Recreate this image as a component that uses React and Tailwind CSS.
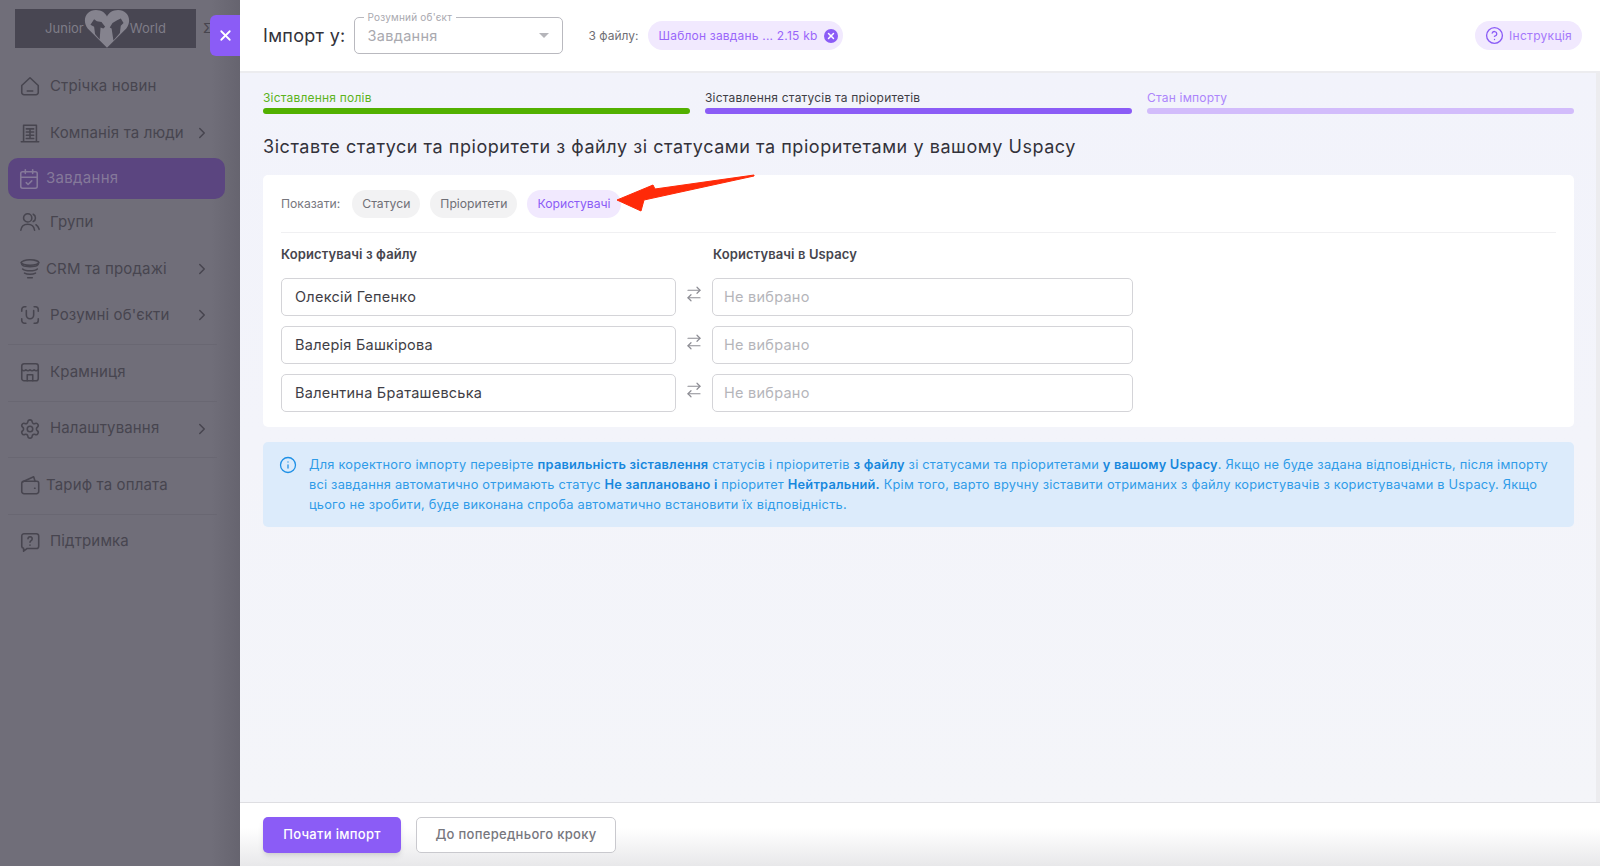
import { ChevronRight, X, Settings, CalendarCheck, ArrowRightLeft, Info, CircleHelp } from 'lucide-react';

const stroke = { fill: 'none', stroke: 'currentColor', strokeWidth: 1.7, strokeLinecap: 'round', strokeLinejoin: 'round' };

const Svg = ({ children }) => (
  <svg viewBox="0 0 24 24" className="w-[22px] h-[22px] shrink-0" {...stroke}>{children}</svg>
);

const HomeIcon = () => (
  <Svg>
    <path d="M3 11.5 12 3l9 8.5V19a2.5 2.5 0 0 1-2.5 2.5h-13A2.5 2.5 0 0 1 3 19z" />
    <path d="M9 17.5h6" />
  </Svg>
);
const BuildingIcon = () => (
  <Svg>
    <path d="M5 21.5V3.5h14v18M2.5 21.5h19" />
    <path d="M8 7.5h8M8 11h8M8 14.5h8M8 18h8M12 7.5V18" />
  </Svg>
);
const GroupIcon = () => (
  <Svg>
    <circle cx="9.5" cy="7.5" r="4.5" />
    <path d="M2 21c.6-4.5 3.4-6.5 7.5-6.5S16.4 16.500 17 21" />
    <path d="M15.500 3.500a4.500 4.500 0 0 1 0 8M18.500 15c1.800.9 2.900 3 3.500 5" />
  </Svg>
);
const CoinsIcon = () => (
  <Svg>
    <ellipse cx="12" cy="5" rx="9.500" ry="3" />
    <path d="M2.500 5c.4 3 1.400 4.500 9.500 4.500S21 8 21.500 5" />
    <path d="M4 12c1.500 1.300 4.300 2 8 2s6.500-.7 8-2M6 16.500c1.500.8 3.600 1.200 6 1.200s4.500-.4 6-1.200M9.500 21.500h5" />
  </Svg>
);
const ScanIcon = () => (
  <Svg>
    <path d="M3 8V6a3 3 0 0 1 3-3h1.500M16.500 3H18a3 3 0 0 1 3 3v2M21 16v2a3 3 0 0 1-3 3h-1.500M7.500 21H6a3 3 0 0 1-3-3v-2" />
    <path d="M8 7v5a4 4 0 0 0 8 0V7" />
  </Svg>
);
const StoreIcon = () => (
  <Svg>
    <rect x="3" y="3" width="18" height="18.500" rx="2.500" />
    <path d="M3 9.500c1.500 1.500 3 1.500 4.500 0 1.500 1.500 3 1.500 4.500 0 1.500 1.500 3 1.500 4.500 0 1.500 1.500 3 1.500 4.500 0" />
    <path d="M9 21.500V15h6v6.500" />
  </Svg>
);
const WalletIcon = () => (
  <Svg>
    <path d="M3 10.500a2.500 2.500 0 0 1 2.500-2.500h14a2 2 0 0 1 2 2v9a2.500 2.500 0 0 1-2.500 2.500H5.500A2.500 2.500 0 0 1 3 19z" />
    <path d="M4 8.500 16 3l1.500 5" />
    <path d="M17 15.500h.5" />
  </Svg>
);
const HelpIcon = () => (
  <Svg>
    <path d="M6 3h13a2.500 2.500 0 0 1 2.500 2.500v11A2.500 2.500 0 0 1 19 19H9l-4 3v-3.100A2.500 2.500 0 0 1 3 16.500v-11A2.500 2.500 0 0 1 6 3z" />
    <path d="M9.800 8.500a2.300 2.300 0 1 1 3.500 2c-.8.500-1.300 1-1.300 1.800M12 15.300v.2" />
  </Svg>
);

const Logo = () => (
  <div className="w-[181px] h-[39px] bg-[#484652] flex items-center justify-center text-[#7f7d88] text-[13px] overflow-hidden">
    <span>Junior</span>
    <svg viewBox="0 0 50 42" className="w-[46px] h-[39px]">
      <path d="M25 42 4 21C-3 11 3 1 13 1c6 0 10 3 12 7 2-4 6-7 12-7 10 0 16 10 9 20z" fill="#85838e" />
      <path d="M7 17l4-6 3 2 5 1 4 5-2 2-3-1-1 13-5-6-1-8z" fill="#484652" />
      <path d="M43 15l-3-5-4 2-5 3-3 5 2 1 2 13 7-8 1-8z" fill="#484652" />
    </svg>
    <span>World</span>
  </div>
);

const NavItem = ({ Icon, label, chevron, shift, inSection, className = '' }) => (
  <div className={`h-[46px] flex items-center text-[#47454f] ${inSection ? 'pl-[11px] pr-[6px]' : 'pl-[19px] pr-[29px]'} ${className}`}>
    <Icon className="w-[22px] h-[22px] shrink-0" strokeWidth={1.7} />
    <span className={`${shift ? 'ml-[5px]' : 'ml-[9px]'} text-[15px] tracking-[0.15px] whitespace-nowrap`}>{label}</span>
    {chevron && <ChevronRight className="ml-auto w-[18px] h-[18px]" strokeWidth={2} />}
  </div>
);

const Section = (props) => (
  <div className="ml-[8px] mr-[23px] border-t border-[#696772] pt-[4px] pb-[5.500px]">
    <NavItem {...props} inSection />
  </div>
);

function Sidebar() {
  return (
    <aside className="w-[240px] shrink-0 bg-gradient-to-r from-[#706e79] from-[88%] to-[#66646f] flex flex-col pt-[9px] relative">
      <div className="pl-[15px] flex items-center gap-[7px] text-[#47454f]">
        <Logo />
        <span className="text-[13px]">Σ</span>
      </div>
      <nav className="mt-[15px] pb-[6px]">
        <NavItem Icon={HomeIcon} label="Стрічка новин" />
        <NavItem Icon={BuildingIcon} label="Компанія та люди" chevron className="mt-[1px]" />
        <div className="mx-[8px] mt-[2px] h-[41px] w-[217px] rounded-[10px] bg-[#5b4580] flex items-center pl-[10px] text-[#85799a]">
          <CalendarCheck className="w-[22px] h-[22px]" strokeWidth={1.7} />
          <span className="ml-[6px] text-[15px] tracking-[0.3px]">Завдання</span>
        </div>
        <NavItem Icon={GroupIcon} label="Групи" />
        <NavItem Icon={CoinsIcon} label="CRM та продажі" chevron shift className="mt-[1px]" />
        <NavItem Icon={ScanIcon} label="Розумні об'єкти" chevron />
      </nav>
      <Section Icon={StoreIcon} label="Крамниця" />
      <Section Icon={Settings} label="Налаштування" chevron />
      <Section Icon={WalletIcon} label="Тариф та оплата" shift />
      <Section Icon={HelpIcon} label="Підтримка" />
      <button className="absolute left-[210px] top-[15px] w-[30px] h-[41px] rounded-l-[6px] bg-[#8b5cf6] flex items-center justify-center text-white">
        <X className="w-[17px] h-[17px]" strokeWidth={2.5} />
      </button>
    </aside>
  );
}

function Header() {
  return (
    <header className="h-[73px] shrink-0 bg-white border-b-2 border-[#ececef] pl-[23px] pr-[18px] flex items-center text-[#33323a]">
      <span className="text-[18px] tracking-[0.3px]">Імпорт у:</span>
      <div className="relative ml-[8px] w-[209px] h-[37px] rounded-[5px] border border-[#b9b9bf] flex items-center px-[13px] text-[14.5px] text-[#a9a9af] tracking-[0.3px]">
        <span className="absolute left-[9px] -top-[8px] bg-white px-[4px] text-[10px] text-[#a9a9af] leading-[14px] tracking-[0.2px]">Розумний об'єкт</span>
        Завдання
        <span className="ml-auto w-0 h-0 border-x-[5px] border-x-transparent border-t-[5px] border-t-[#b5b5ba]" />
      </div>
      <span className="ml-[26px] text-[12px] text-[#6f6f76]">З файлу:</span>
      <div className="ml-[9px] h-[29px] w-[195px] rounded-full bg-[#f1e9fe] pl-[11px] pr-[5px] flex items-center text-[12px] text-[#9a66fa] tracking-[0.2px]">
        Шаблон завдань ... 2.15 kb
        <span className="ml-auto w-[14px] h-[14px] rounded-full bg-[#8b5cf6] flex items-center justify-center text-white">
          <X className="w-[10px] h-[10px]" strokeWidth={3.5} />
        </span>
      </div>
      <div className="ml-auto h-[29px] w-[107px] rounded-full bg-[#f1e9fe] flex items-center pl-[10px] text-[12px] text-[#a578fb] tracking-[0.3px]">
        <CircleHelp className="w-[19px] h-[19px] text-[#8b5cf6]" strokeWidth={1.7} />
        <span className="ml-[5px]">Інструкція</span>
      </div>
    </header>
  );
}

const Step = ({ label, textClass, barClass }) => (
  <div className="flex-1">
    <div className={`text-[12px] leading-[15px] tracking-[0.2px] ${textClass}`}>{label}</div>
    <div className={`mt-[3px] h-[6px] rounded-full ${barClass}`} />
  </div>
);

const Pill = ({ children, active }) => (
  <span className={`h-[28px] px-[10px] rounded-full flex items-center text-[12.200px] ${active ? 'bg-[#f1e9fe] text-[#8b5cf6]' : 'bg-[#f2f2f3] text-[#6f6f76]'}`}>
    {children}
  </span>
);

const names = ['Олексій Гепенко', 'Валерія Башкірова', 'Валентина Браташевська'];

function MappingRow({ name }) {
  return (
    <div className="flex items-center">
      <div className="w-[395px] h-[38px] rounded-[5px] border border-[#d4d4d8] flex items-center pl-[13px] text-[14.5px] text-[#3f3e46] tracking-[0.25px]">{name}</div>
      <div className="w-[37px] flex justify-center -mt-[7px] -ml-[1px] text-[#8d8d94]">
        <ArrowRightLeft className="w-[18px] h-[18px]" strokeWidth={1.6} />
      </div>
      <div className="w-[421px] h-[38px] rounded-[5px] border border-[#d4d4d8] flex items-center pl-[11px] text-[14.5px] text-[#b5b5ba] tracking-[0.25px]">Не вибрано</div>
    </div>
  );
}

function InfoBox() {
  return (
    <div className="mt-[15px] rounded-[5px] bg-[#dcebfb] pl-[16px] pr-[20px] pt-[13px] pb-[12px] flex text-[12.800px] leading-[20px] text-[#2f9be8] tracking-[0.22px]">
      <Info className="w-[18px] h-[18px] shrink-0 mt-[1px] text-[#1e90e6]" strokeWidth={1.7} />
      <p className="ml-[12px]">
        Для коректного імпорту перевірте <b className="font-semibold text-[#1787dd]">правильність зіставлення</b> статусів і пріоритетів <b className="font-semibold text-[#1787dd]">з файлу</b> зі статусами та пріоритетами <b className="font-semibold text-[#1787dd]">у вашому Uspacy</b>. Якщо не буде задана відповідність, після імпорту всі завдання автоматично отримають статус <b className="font-semibold text-[#1787dd]">Не заплановано і</b> пріоритет <b className="font-semibold text-[#1787dd]">Нейтральний.</b> Крім того, варто вручну зіставити отриманих з файлу користувачів з користувачами в Uspacy. Якщо цього не зробити, буде виконана спроба автоматично встановити їх відповідність.
      </p>
    </div>
  );
}

export default function App() {
  return (
    <div className="relative w-[1600px] h-[866px] flex overflow-hidden font-['Inter',sans-serif]">
      <Sidebar />
      <main className="flex-1 min-w-0 flex flex-col bg-[#f3f4fa] z-10">
        <Header />
        <div className="flex-1 pl-[23px] pr-[22px] pt-[17px] bg-gradient-to-b from-[#f2f3fb] to-[#f4f5f9] border-r-[4px] border-[#ececef]">
          <div className="flex gap-[15px]">
            <Step label="Зіставлення полів" textClass="text-[#5cb31c]" barClass="bg-[#52b000]" />
            <Step label="Зіставлення статусів та пріоритетів" textClass="text-[#3f3e46]" barClass="bg-[#8b5cf6]" />
            <Step label="Стан імпорту" textClass="text-[#ad85fb]" barClass="bg-[#d2bcfb]" />
          </div>
          <h1 className="mt-[21px] text-[18px] leading-[24px] text-[#33323a] tracking-[0.55px] whitespace-nowrap">
            Зіставте статуси та пріоритети з файлу зі статусами та пріоритетами у вашому Uspacy
          </h1>
          <section className="mt-[16px] h-[252px] rounded-[5px] bg-white px-[18px] pt-[15px]">
            <div className="h-[43px] border-b border-[#f0f0f2] flex items-start">
              <div className="flex items-center">
                <span className="text-[12.200px] text-[#77777e] mr-[12px]">Показати:</span>
                <div className="flex gap-[10px]">
                  <Pill>Статуси</Pill>
                  <Pill>Пріоритети</Pill>
                  <Pill active>Користувачі</Pill>
                </div>
              </div>
            </div>
            <div className="mt-[13px] flex text-[13px] font-semibold text-[#46454d] leading-[16px] tracking-[0.1px]">
              <span className="w-[432px]">Користувачі з файлу</span>
              <span>Користувачі в Uspacy</span>
            </div>
            <div className="mt-[16px] flex flex-col gap-[10px]">
              {names.map((n) => <MappingRow key={n} name={n} />)}
            </div>
          </section>
          <InfoBox />
        </div>
        <footer className="h-[64px] shrink-0 border-t border-[#dedee2] bg-gradient-to-b from-white from-40% to-[#e8e8ea] pl-[23px] pt-[14px] flex items-start gap-[15px]">
          <button className="w-[138px] h-[36px] rounded-[5px] bg-[#8b5cf6] text-white text-[13px] font-medium tracking-[0.3px] shadow-md">Почати імпорт</button>
          <button className="w-[200px] h-[36px] rounded-[5px] border border-[#c9c9ce] bg-white text-[#77777e] text-[13px] font-medium tracking-[0.3px]">До попереднього кроку</button>
        </footer>
      </main>
      <svg className="absolute left-[608px] top-[170px] z-20" width="150" height="46" viewBox="0 0 150 46">
        <path d="M146 5 L47 19 L45 15 L9 30 L33 41 L36 30 L146 6 Z" fill="#ff2a08" stroke="#ff2a08" strokeLinejoin="round" />
      </svg>
    </div>
  );
}
